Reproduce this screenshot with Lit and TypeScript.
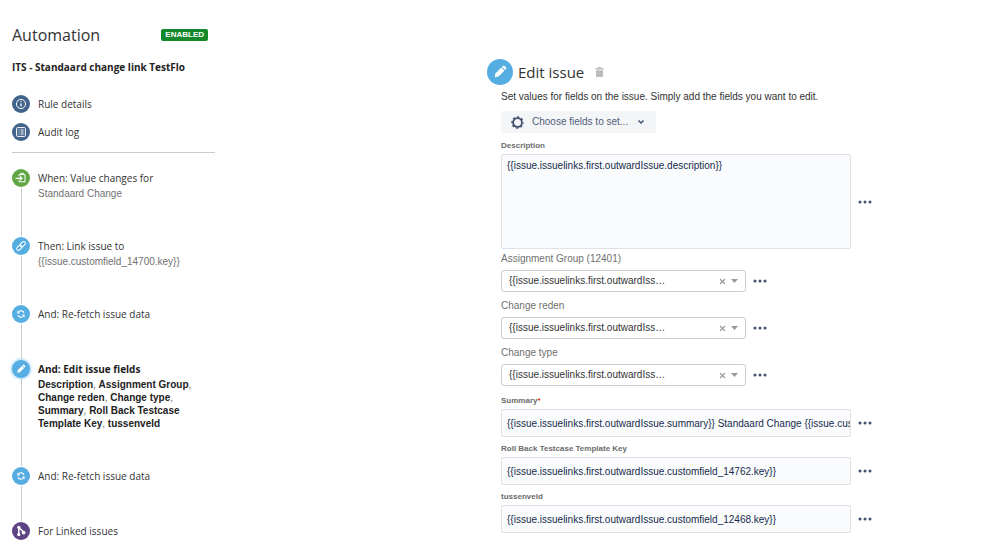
import { LitElement, html, svg, css, nothing } from "lit";
import { customElement, property } from "lit/decorators.js";
import { classMap } from "lit/directives/class-map.js";

type IconName = "info" | "log" | "trigger" | "link" | "refresh" | "pencil" | "branch";

const glyphs: Record<IconName, unknown> = {
  info: svg`<circle cx="9" cy="9" r="4.6"/><path stroke-width="1.300" d="M9 8.400v3M9 6.200v1.100"/>`,
  log: svg`<rect x="4.6" y="4.6" width="8.8" height="8.8" rx="1"/><path d="M6.600 7h.8M8.600 7h3M6.600 9h.8M8.600 9h3M6.600 11h.8M8.600 11h3"/>`,
  trigger: svg`<path d="M7 7.200V5.600h6v7.200H7v-1.600M8.600 5.400V4.300h2.800v1.100"/><path stroke-width="1.300" d="M3.600 9.300h6M8 7.500l2 1.800-2 1.800"/>`,
  link: svg`<g transform="rotate(-45 9 9)"><rect x="3.6" y="7.2" width="6" height="3.6" rx="1.8"/><rect x="8.4" y="7.2" width="6" height="3.6" rx="1.8"/></g>`,
  refresh: svg`<path stroke-width="1.200" d="M12 7.800A3.200 3.200 0 0 0 6.500 7M6 10.200A3.200 3.200 0 0 0 11.500 11"/><path d="M5.400 5.600v2.800h2.800zM12.600 12.400V9.600H9.800z" fill="#fff" stroke="none"/>`,
  pencil: svg`<g transform="rotate(45 9 9)" fill="#fff" stroke="none"><path d="M7.500 6.200h3v5.800L9 14.200 7.500 12z"/><path d="M7.500 5.600V4.700a.9.9 0 0 1 .9-.9h1.200a.9.9 0 0 1 .9.9v.9z"/></g>`,
  branch: svg`<path d="M6.800 5.500v7M6.800 5.500l4.800 4.500" stroke-width="1.500"/><g fill="#fff" stroke="none"><circle cx="6.800" cy="5.300" r="1.600"/><circle cx="6.800" cy="12.600" r="1.600"/><circle cx="11.600" cy="10.600" r="1.900"/></g>`,
};

@customElement("round-icon")
class RoundIcon extends LitElement {
  @property() name: IconName = "info";
  @property() tone = "blue";
  @property({ type: Boolean }) glow = false;

  static styles = css`
    :host { display: block; width: 18px; height: 18px; }
    .disc { display: block; width: 100%; height: 100%; border-radius: 50%; }
    .navy { background: #42648c; }
    .green { background: #60a744; }
    .blue { background: #56ade1; }
    .purple { background: #5d4585; }
    .glow { box-shadow: 0 0 3px 1px #9fd2f2; }
  `;

  render() {
    return html`<svg class=${classMap({ disc: true, [this.tone]: true, glow: this.glow })}
      viewBox="0 0 18 18" fill="none" stroke="#fff" stroke-width="1" aria-hidden="true">${glyphs[this.name]}</svg>`;
  }
}

interface Step {
  icon: IconName;
  tone: string;
  title: string;
  detail?: string;
  fields?: string[];
}

const steps: Step[] = [
  { icon: "trigger", tone: "green", title: "When: Value changes for", detail: "Standaard Change" },
  { icon: "link", tone: "blue", title: "Then: Link issue to", detail: "{{issue.customfield_14700.key}}" },
  { icon: "refresh", tone: "blue", title: "And: Re-fetch issue data" },
  {
    icon: "pencil", tone: "blue", title: "And: Edit issue fields",
    fields: ["Description", "Assignment Group", "Change reden", "Change type", "Summary", "Roll Back Testcase Template Key", "tussenveld"],
  },
  { icon: "refresh", tone: "blue", title: "And: Re-fetch issue data" },
  { icon: "branch", tone: "purple", title: "For Linked issues" },
];

@customElement("rule-sidebar")
class RuleSidebar extends LitElement {
  static styles = css`
    :host { display: block; color: #333; }
    h1, h2, ol { margin: 0; padding: 0; font-weight: 400; }
    a { color: inherit; text-decoration: none; }
    .head { display: flex; align-items: center; justify-content: space-between; padding-right: 7px; }
    h1 { font: 16px/22px "Open Sans", sans-serif; }
    .badge { padding: 0 4px; border-radius: 2px; background: #14892c; color: #fff; font: bold 8px/12px "Liberation Sans", sans-serif; }
    h2 { margin-top: 12px; font: bold 10px/18px "Open Sans", sans-serif; color: #222; }
    .menu { display: grid; gap: 10px; margin-top: 19px; padding-bottom: 11px; border-bottom: 1px solid #ccc; }
    .entry { display: grid; grid-template-columns: 18px 1fr; column-gap: 8px; font: 10px/18px "Open Sans", sans-serif; }
    ol { list-style: none; margin-top: 16px; }
    .step { display: grid; grid-template-columns: 18px 1fr; column-gap: 8px; }
    .rail { display: flex; flex-direction: column; align-items: center; }
    .rail::after { content: ""; flex: 1; width: 1px; margin: 1px 0; background: #ccc; }
    .body { display: block; padding-bottom: 37px; }
    .step.last .rail::after { display: none; }
    .step.last .body { padding-bottom: 0; }
    .title { display: block; font: 10px/18px "Open Sans", sans-serif; }
    .detail { display: block; max-width: 164px; font: 10px/13px "Liberation Sans", sans-serif; color: #707070; }
    .current .title, b { font-weight: bold; color: #222; }
  `;

  render() {
    return html`
      <div class="head"><h1>Automation</h1><span class="badge">ENABLED</span></div>
      <h2>ITS - Standaard change link TestFlo</h2>
      <nav class="menu">
        <a class="entry" href="#details"><round-icon name="info" tone="navy"></round-icon>Rule details</a>
        <a class="entry" href="#audit"><round-icon name="log" tone="navy"></round-icon>Audit log</a>
      </nav>
      <ol>
        ${steps.map((s, i) => html`<li>
          <a href="#step-${i + 1}" class=${classMap({ step: true, current: !!s.fields, last: i === steps.length - 1 })}>
            <span class="rail"><round-icon name=${s.icon} tone=${s.tone} ?glow=${!!s.fields}></round-icon></span>
            <span class="body">
              <span class="title">${s.title}</span>
              ${s.detail ? html`<span class="detail">${s.detail}</span>` : nothing}
              ${s.fields ? html`<span class="detail">${s.fields.map((f, n) => html`${n ? ", " : ""}<b>${f}</b>`)}</span>` : nothing}
            </span>
          </a>
        </li>`)}
      </ol>`;
  }
}

interface Field {
  id: string;
  label: string;
  kind: "area" | "select" | "text";
  value: string;
  required?: boolean;
}

const fields: Field[] = [
  { id: "description", label: "Description", kind: "area", value: "{{issue.issuelinks.first.outwardIssue.description}}" },
  { id: "group", label: "Assignment Group (12401)", kind: "select", value: "{{issue.issuelinks.first.outwardIss…" },
  { id: "reden", label: "Change reden", kind: "select", value: "{{issue.issuelinks.first.outwardIss…" },
  { id: "type", label: "Change type", kind: "select", value: "{{issue.issuelinks.first.outwardIss…" },
  { id: "summary", label: "Summary", kind: "text", required: true, value: "{{issue.issuelinks.first.outwardIssue.summary}} Standaard Change {{issue.cus" },
  { id: "rollback", label: "Roll Back Testcase Template Key", kind: "text", value: "{{issue.issuelinks.first.outwardIssue.customfield_14762.key}}" },
  { id: "tussenveld", label: "tussenveld", kind: "text", value: "{{issue.issuelinks.first.outwardIssue.customfield_12468.key}}" },
];

@customElement("edit-issue")
class EditIssue extends LitElement {
  static styles = css`
    :host { display: block; color: #333; font: 10px/14px "Liberation Sans", sans-serif; }
    * { box-sizing: border-box; }
    h2, p { margin: 0; }
    button { padding: 0; border: 0; background: none; font: inherit; color: inherit; }
    input, textarea, select { font: inherit; color: #172b4d; margin: 0; outline: 0; }
    .head { display: flex; align-items: center; gap: 5px; }
    .head round-icon { width: 26px; height: 26px; }
    h2 { font: 15px/26px "Open Sans", sans-serif; }
    .trash { display: flex; margin-left: 6px; }
    .content { padding-left: 14px; }
    .intro { margin-top: 5px; }
    .choose { display: flex; align-items: center; height: 22px; margin-top: 7px; padding: 0 11px 0 10px; border-radius: 2px; background: #f4f5f7; color: #505f79; }
    .choose .label { margin: 0 9px 0 8px; }
    .field { display: grid; gap: 2px; }
    .area { margin-top: 7px; }
    .text { margin-top: 6px; }
    .select { margin-top: 7px; gap: 4px; color: #707070; }
    .area + .select { margin-top: 3px; }
    .select + .text { margin-top: 9px; }
    .area label, .text label { font: bold 8px/12px "Liberation Sans", sans-serif; color: #6b6b6b; }
    .star { color: #de350b; }
    .line { display: flex; align-items: center; gap: 7px; }
    .box { flex: 1; min-width: 0; border: 1px solid #dfe1e6; border-radius: 2px; background: #fafbfc; }
    textarea.box { height: 95px; padding: 4px 5px; resize: none; display: block; }
    input.box { height: 28px; padding: 0 0 0 5px; }
    .picker { display: flex; align-items: center; width: 245px; height: 22px; padding: 0 7px; border: 1px solid #ccc; border-radius: 3px; background: #fff; }
    .picker select { flex: 1; min-width: 0; appearance: none; border: 0; padding: 0; background: none; color: #333; }
    .clear { color: #999; display: flex; margin-right: 5px; }
    .more { display: flex; color: #42526e; }
    svg { display: block; }
  `;

  private more(label: string) {
    return html`<button class="more" aria-label="More options for ${label}">
      <svg width="14" height="6" viewBox="0 0 14 6" fill="currentColor"><circle cx="2" cy="3" r="1.500"/><circle cx="7" cy="3" r="1.500"/><circle cx="12" cy="3" r="1.500"/></svg>
    </button>`;
  }

  private control(f: Field) {
    if (f.kind === "area") return html`<textarea class="box" id=${f.id} .value=${f.value}></textarea>`;
    if (f.kind === "text") return html`<input class="box" type="text" id=${f.id} .value=${f.value} ?required=${f.required}>`;
    return html`<div class="picker">
      <select id=${f.id}><option>${f.value}</option></select>
      <button class="clear" aria-label="Clear ${f.label}"><svg width="7" height="7" viewBox="0 0 7 7" stroke="currentColor" stroke-width="1.100"><path d="M1 1l5 5M6 1l-5 5"/></svg></button>
      <svg width="7" height="6" viewBox="0 0 7 6" fill="#999" aria-hidden="true"><path d="M0 1h7L3.500 5z"/></svg>
    </div>`;
  }

  render() {
    return html`
      <div class="head">
        <round-icon name="pencil" tone="blue"></round-icon>
        <h2>Edit issue</h2>
        <button class="trash" aria-label="Delete">
          <svg width="9" height="10" viewBox="0 0 9 10" fill="#bbb"><path d="M3 0h3v1h2.500v1.500h-8V1H3zM1 3.200h7V9a1 1 0 0 1-1 1H2a1 1 0 0 1-1-1z"/></svg>
        </button>
      </div>
      <div class="content">
        <p class="intro">Set values for fields on the issue. Simply add the fields you want to edit.</p>
        <button class="choose">
          <svg width="13" height="13" viewBox="0 0 13 13" fill="none" stroke="#42526e"><circle cx="6.500" cy="6.500" r="4.400" stroke-width="1.700"/><circle cx="6.500" cy="6.500" r="5.500" stroke-width="1.400" stroke-dasharray="2.400 1.920" stroke-dashoffset="1.200"/></svg>
          <span class="label">Choose fields to set...</span>
          <svg width="8" height="6" viewBox="0 0 8 6" fill="none" stroke="#42526e" stroke-width="1.500"><path d="M1.500 1.500L4 4l2.500-2.500"/></svg>
        </button>
        ${fields.map((f) => html`<div class="field ${f.kind}">
          <label for=${f.id}>${f.label}${f.required ? html`<span class="star">*</span>` : nothing}</label>
          <div class="line">${this.control(f)}${this.more(f.label)}</div>
        </div>`)}
      </div>`;
  }
}

@customElement("app-root")
class AppRoot extends LitElement {
  static styles = css`
    :host { display: block; background: #fff; }
    .page { display: grid; grid-template-columns: 475fr 511fr; padding-left: 12px; }
    .side { max-width: 203px; padding-top: 24px; }
    .main { max-width: 385px; padding-top: 59px; }
  `;

  render() {
    return html`<div class="page">
      <aside class="side"><rule-sidebar></rule-sidebar></aside>
      <main class="main"><edit-issue></edit-issue></main>
    </div>`;
  }
}
